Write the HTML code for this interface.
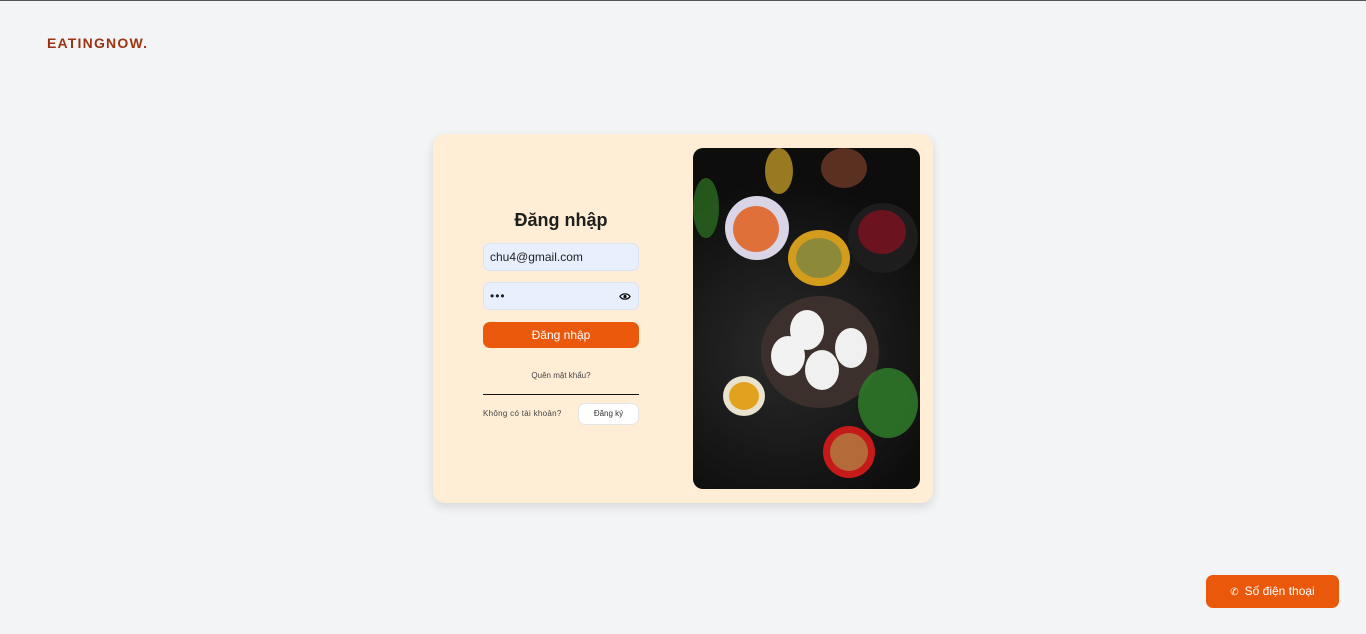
<!DOCTYPE html>
<html><head><meta charset="utf-8"><style>
*{box-sizing:border-box;margin:0;padding:0}
body{width:1366px;height:634px;background:#f3f4f6;font-family:"Liberation Sans",sans-serif;position:relative;overflow:hidden}
.top{position:absolute;left:0;top:0;width:1366px;height:1px;background:#555}
.logo{position:absolute;left:47px;top:35px;font-weight:bold;font-size:14px;color:#9a3412;letter-spacing:1.2px}
.card{position:absolute;left:433px;top:134px;width:500px;height:369px;background:#ffedd5;border-radius:12px;box-shadow:0 4px 10px rgba(0,0,0,.12)}
.img{position:absolute;left:260px;top:14px;width:227px;height:341px;border-radius:10px;overflow:hidden;background:radial-gradient(circle at 40% 60%,#2a2a2a,#0d0d0d 70%)}
.c{position:absolute;border-radius:50%}
h1{position:absolute;left:50px;width:156px;top:76px;text-align:center;font-size:18px;color:#1f1f1f}
.in{position:absolute;left:50px;width:156px;height:28px;background:#e8f0fe;border:1px solid #dbe3f3;border-radius:7px;font-size:12px;color:#222;padding:6px 6px}
.btn{position:absolute;left:50px;top:188px;width:156px;height:26px;background:#ea580c;border-radius:7px;color:#fff;font-size:12px;text-align:center;line-height:26px}
.fg{position:absolute;left:50px;width:156px;top:237px;text-align:center;font-size:8px;color:#444}
.ln{position:absolute;left:50px;width:156px;top:260px;height:1px;background:#111}
.nt{position:absolute;left:50px;top:275px;font-size:8px;color:#444;letter-spacing:.3px}
.rg{position:absolute;left:145px;top:269px;width:61px;height:22px;background:#fff;border:1px solid #e5e5e5;border-radius:7px;font-size:8px;text-align:center;line-height:20px;color:#333}
.ph{position:absolute;left:1206px;top:575px;width:133px;height:33px;background:#ea580c;border-radius:7px;color:#fff;font-size:12px;line-height:33px;text-align:center}
</style></head><body>
<div class="top"></div>
<div class="logo">EATINGNOW.</div>
<div class="card">
<h1>Đăng nhập</h1>
<div class="in" style="top:109px">chu4@gmail.com</div>
<div class="in" style="top:148px;letter-spacing:1px">•••<svg style="position:absolute;right:7px;top:9px" width="12" height="9" viewBox="0 0 12 9"><path d="M1 4.5C3 1 9 1 11 4.5C9 8 3 8 1 4.5Z" fill="none" stroke="#111" stroke-width="1.3"/><circle cx="6" cy="4.5" r="1.6" fill="#111"/></svg></div>
<div class="btn">Đăng nhập</div>
<div class="fg">Quên mật khẩu?</div>
<div class="ln"></div>
<div class="nt">Không có tài khoản?</div>
<div class="rg">Đăng ký</div>
<div class="img">
<div class="c" style="left:32px;top:48px;width:64px;height:64px;background:#d9d4e6"></div>
<div class="c" style="left:40px;top:58px;width:46px;height:46px;background:#e0703a"></div>
<div class="c" style="left:95px;top:82px;width:62px;height:56px;background:#d39c1c"></div>
<div class="c" style="left:103px;top:90px;width:46px;height:40px;background:#8c8a3a"></div>
<div class="c" style="left:155px;top:55px;width:70px;height:70px;background:#1d1d1d"></div>
<div class="c" style="left:165px;top:62px;width:48px;height:44px;background:#6b1420"></div>
<div class="c" style="left:128px;top:0px;width:46px;height:40px;background:#5a3020"></div>
<div class="c" style="left:68px;top:148px;width:118px;height:112px;background:#3b302c"></div>
<div class="c" style="left:97px;top:162px;width:34px;height:40px;background:#f2f2f2"></div>
<div class="c" style="left:78px;top:188px;width:34px;height:40px;background:#f2f2f2"></div>
<div class="c" style="left:112px;top:202px;width:34px;height:40px;background:#f0f0f0"></div>
<div class="c" style="left:142px;top:180px;width:32px;height:40px;background:#f0f0f0"></div>
<div class="c" style="left:30px;top:228px;width:42px;height:40px;background:#e9e2cf"></div>
<div class="c" style="left:36px;top:234px;width:30px;height:28px;background:#e2a21e"></div>
<div class="c" style="left:130px;top:278px;width:52px;height:52px;background:#c41a1a"></div>
<div class="c" style="left:137px;top:285px;width:38px;height:38px;background:#b56a3a"></div>
<div class="c" style="left:165px;top:220px;width:60px;height:70px;background:#2f7d2a;opacity:.85"></div>
<div class="c" style="left:0;top:30px;width:26px;height:60px;background:#2c6a22;opacity:.8"></div>
<div class="c" style="left:72px;top:0;width:28px;height:46px;background:#9a7a20"></div>
</div>
</div>
<div class="ph"><span style="font-size:10px;margin-right:6px">&#9990;</span>Số điện thoại</div>
</body></html>
